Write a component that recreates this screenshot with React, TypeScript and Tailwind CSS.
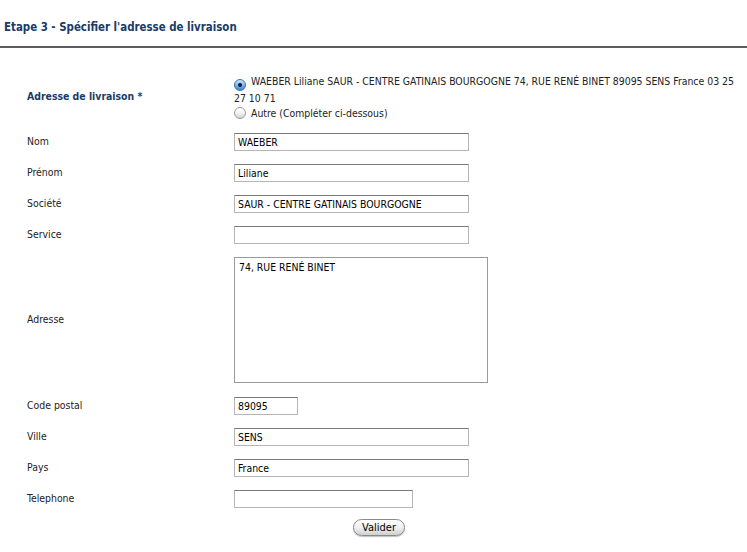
import React from "react";

const font = { fontFamily: '"DejaVu Sans Condensed", "DejaVu Sans", sans-serif' };

function Field({ label, value = "", width = "w-[235px]" }: { label: string; value?: string; width?: string }) {
  return (
    <div className="grid grid-cols-[207px_1fr] items-center h-[31px]">
      <span className="text-[#222]">{label}</span>
      <div
        className={`${width} h-[18px] border border-[#b5b5b5] border-t-[#7a7a7a] bg-white px-[3px] leading-[16px] text-black`}
      >
        {value}
      </div>
    </div>
  );
}

function Radio({ checked }: { checked?: boolean }) {
  if (checked) {
    return (
      <span className="inline-flex items-center justify-center w-[12px] h-[12px] rounded-full border border-[#3d6fa8] bg-gradient-to-b from-[#cfe6fb] via-[#7fb6ec] to-[#3f88d8] mr-[5px] align-[-2px]">
        <span className="w-[4px] h-[4px] rounded-full bg-[#111a2e]" />
      </span>
    );
  }
  return (
    <span className="inline-flex w-[12px] h-[12px] rounded-full border border-[#9a9a9a] bg-gradient-to-b from-white via-[#f2f2f2] to-[#d4d4d4] mr-[5px] align-[-2px]" />
  );
}

export default function App() {
  return (
    <div className="w-[747px] h-[552px] bg-white text-[10.4px] text-[#222]" style={font}>
      <div className="pt-[19px] pl-[4px] h-[46px] font-bold text-[#1a3b68] text-[11.4px]">
        Etape 3 - Spécifier l'adresse de livraison
      </div>
      <div className="h-[2px] bg-[#5c5c5c]" />

      <div className="pl-[27px] pt-[26px]">
        <div className="grid grid-cols-[207px_1fr] items-center">
          <span className="font-bold text-[#1a3b68]">Adresse de livraison *</span>
          <div className="leading-[14px] pr-[10px]">
            <div>
              <Radio checked />
              WAEBER Liliane SAUR - CENTRE GATINAIS BOURGOGNE 74, RUE RENÉ BINET 89095 SENS France 03 25 27 10 71
            </div>
            <div className="mt-[1px]">
              <Radio />
              Autre (Compléter ci-dessous)
            </div>
          </div>
        </div>

        <div className="mt-[6px]">
          <Field label="Nom" value="WAEBER" />
          <Field label="Prénom" value="Liliane" />
          <Field label="Société" value="SAUR - CENTRE GATINAIS BOURGOGNE" />
          <Field label="Service" />
          <div className="grid grid-cols-[207px_1fr] items-center h-[140px]">
            <span>Adresse</span>
            <div className="w-[254px] h-[126px] border border-[#9a9a9a] bg-white px-[4px] py-[2px] leading-[14px] text-black">
              74, RUE RENÉ BINET
            </div>
          </div>
          <Field label="Code postal" value="89095" width="w-[64px]" />
          <Field label="Ville" value="SENS" />
          <Field label="Pays" value="France" />
          <Field label="Telephone" width="w-[179px]" />
        </div>

        <div className="flex justify-center mt-[5px] w-[704px]">
          <button className="h-[17px] px-[8px] rounded-full border border-[#8a8a8a] bg-gradient-to-b from-white via-[#f0f0f0] to-[#cfcfcf] text-[11px] leading-[15px] text-black shadow-[0_1px_1px_rgba(0,0,0,0.25)]">
            Valider
          </button>
        </div>
      </div>
    </div>
  );
}
